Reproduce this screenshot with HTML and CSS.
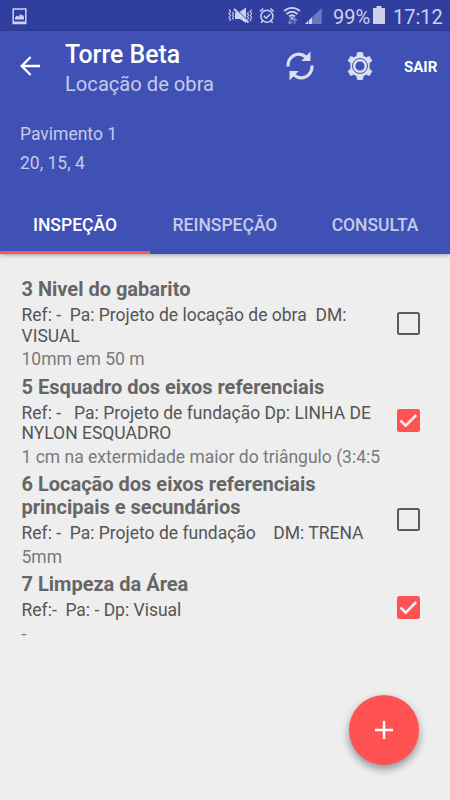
FILE: index.html
```html
<!DOCTYPE html>
<html lang="pt-BR">
<head>
<meta charset="utf-8">
<title>Torre Beta</title>
<link rel="stylesheet" href="styles.css">
</head>
<body>
<div class="screen">
  <div class="status">
    <svg class="picture" width="15" height="17" viewBox="0 0 15 17"><path fill="none" stroke="currentColor" stroke-width="1.5" d="M1.2.9h12.600v14.700h-12.600z"/><path fill="currentColor" d="M1 13.500h13v2.500H1zM3 11.500V9.500l2-2 1.500 1.200L8.500 6l1.500 1.500 1-.5 1 2v2.500z"/></svg>
    <div class="indicators">
      <svg width="97" height="20" viewBox="0 0 97 20">
        <g fill="none" stroke="currentColor" stroke-width="1.100"><path d="M1 3.500l1.500 2-1.500 2 1.500 2-1.500 2 1.500 2-1 1.500M4.500 6l1 1.500-1 1.500 1 1.500-1 1.500 1 1.500M20.500 6l-1 1.500 1 1.500-1 1.500 1 1.500-1 1.500M23.700 3.500l-1.500 2 1.500 2-1.500 2 1.500 2-1.500 2 1 1.500"/><path stroke-width="2" d="M6 3l14.500 13.500"/></g>
        <path fill="currentColor" d="M7 6.500h3l8 7.500v3l-6-4H7zM11.500 6L18 1.500v10.500z"/>
        <g fill="none" stroke="currentColor" stroke-width="1.500"><circle cx="38.900" cy="10.200" r="6"/><path d="M35.800 9.800l2.400 2.400 3.900-4M32 5.500l3.300-2.900M45.800 5.500l-3.300-2.900M34.700 14.800l-1.700 2M43 14.800l1.700 2"/></g>
        <g fill="none" stroke="currentColor" stroke-width="1.800"><path d="M56 5.200c4.500-4.500 11.500-4.500 16 0M58.500 8c3-3 8-3 11 0M61 10.500c1.700-1.700 4.300-1.700 6 0"/></g>
        <path fill="currentColor" d="M62.200 11.800q1.800-1.400 3.600 0L64 14z"/>
        <path opacity=".5" fill="none" stroke="currentColor" stroke-width="1.300" d="M62 12.500v5.500M59.800 15.700l2.200 2.200 2.200-2.200M66.700 18v-5.500M64.500 14.700l2.200-2.200 2.200 2.200"/>
        <path opacity=".4" fill="currentColor" d="M77 18L93.700 2v16z"/>
        <path fill="currentColor" d="M77 18l3-3v3zM81 18v-3.800l3-2.900V18z"/>
      </svg>
      <span class="percent">99%</span>
      <svg class="battery" width="12" height="18" viewBox="0 0 12 18"><path fill="currentColor" d="M3.500 0h5v2H12v16H0V2h3.500z"/></svg>
      <span class="time">17:12</span>
    </div>
  </div>
  <header class="header">
    <div class="toolbar">
      <svg class="back" width="20" height="20" viewBox="0 0 20 20"><path fill="none" stroke="#fff" stroke-width="2.300" d="M20 10H2M10.600 1L1.700 10l8.900 9"/></svg>
      <div class="heading">
        <h1>Torre Beta</h1>
        <p>Locação de obra</p>
      </div>
      <svg class="sync" width="28" height="30" viewBox="0 0 28 30"><g fill="none" stroke="currentColor" stroke-width="3.200"><path d="M1.900 15.500C1.900 5 12-.500 20 6"/><path d="M26.100 14.500C26.100 25 16 30.500 8 24"/></g><path fill="currentColor" d="M24.500.500V10H15.300zM3.500 29.500V20h9.200z"/></svg>
      <svg class="gear" width="26" height="28" viewBox="0 0 26 28"><path fill="currentColor" stroke="currentColor" stroke-width=".8" stroke-linejoin="round" d="M10.500.500h5l.7 3.600 2.700 1.600 3.500-1.200 2.500 4.300-2.800 2.400v5.600l2.800 2.400-2.500 4.300-3.500-1.200-2.700 1.600-.7 3.600h-5l-.7-3.600-2.700-1.600-3.500 1.200-2.500-4.300 2.800-2.400v-5.600L1.100 8.800l2.500-4.300 3.500 1.200 2.700-1.600z"/><circle cx="13" cy="14" r="7.500" fill="none" stroke="#3f51b5" stroke-width="1"/><circle cx="13" cy="14" r="4.600" fill="#3f51b5"/></svg>
      <span class="exit">SAIR</span>
    </div>
    <div class="place">
      <p>Pavimento 1</p>
      <p>20, 15, 4</p>
    </div>
    <nav class="tabs">
      <span class="tab active">INSPEÇÃO</span>
      <span class="tab">REINSPEÇÃO</span>
      <span class="tab">CONSULTA</span>
    </nav>
  </header>
  <main class="list">
    <section class="item">
      <div class="text">
        <h2>3 Nivel do gabarito</h2>
        <p class="ref">Ref: -  Pa: Projeto de locação de obra  DM:
VISUAL</p>
        <p class="note">10mm em 50 m</p>
      </div>
      <span class="box"></span>
    </section>
    <section class="item">
      <div class="text">
        <h2>5 Esquadro dos eixos referenciais</h2>
        <p class="ref">Ref: -   Pa: Projeto de fundação Dp: LINHA DE
NYLON ESQUADRO</p>
        <p class="note">1 cm na extermidade maior do triângulo (3:4:5</p>
      </div>
      <span class="box checked"><svg width="23" height="23" viewBox="0 0 23 23"><path d="M3.500 11.500l5.200 5.200L19.200 6"/></svg></span>
    </section>
    <section class="item">
      <div class="text">
        <h2>6 Locação dos eixos referenciais
principais e secundários</h2>
        <p class="ref">Ref: -  Pa: Projeto de fundação    DM: TRENA</p>
        <p class="note">5mm</p>
      </div>
      <span class="box"></span>
    </section>
    <section class="item">
      <div class="text">
        <h2>7 Limpeza da Área</h2>
        <p class="ref">Ref:-  Pa: - Dp: Visual</p>
        <p class="note">-</p>
      </div>
      <span class="box checked"><svg width="23" height="23" viewBox="0 0 23 23"><path d="M3.500 11.500l5.200 5.200L19.200 6"/></svg></span>
    </section>
  </main>
  <div class="fab"><svg width="18" height="18" viewBox="0 0 18 18"><path d="M9 0v18M0 9h18" stroke="#fff" stroke-width="2.500"/></svg></div>
</div>
</body>
</html>
```
FILE: styles.css
```css
* { box-sizing: border-box; margin: 0; padding: 0; }
body { font-family: Roboto, "Liberation Sans", sans-serif; background: #eee; }
svg { display: block; flex: none; }
.screen { position: relative; width: 450px; height: 800px; overflow: hidden; background: #eee; }
.status { height: 31px; background: #303f9f; color: #cdd1eb; display: flex; justify-content: space-between; padding: 0 8px 0 12px; }
.picture { margin-top: 8px; }
.indicators { display: flex; align-items: flex-start; padding-top: 6px; }
.percent, .time { font-size: 20px; line-height: 22px; }
.percent { margin-left: 8px; width: 40px; }
.battery { margin-right: 8px; }
.time { width: 49px; white-space: nowrap; }
.header { position: relative; z-index: 1; height: 223px; background: #3f51b5; color: #c5cae9; box-shadow: 0 1px 4px rgba(0,0,0,.35); display: flex; flex-direction: column; }
.toolbar { display: flex; align-items: center; height: 70px; padding-left: 20px; }
.heading { width: 221px; margin-left: 25px; white-space: nowrap; padding-top: 7px; }
.heading h1 { color: #fff; font-size: 24.900px; font-weight: 500; line-height: 29px; }
.heading p { font-size: 20.150px; line-height: 30px; }
.sync { color: #dcdff1; }
.gear { color: #dcdff1; margin-left: 33px; }
.exit { margin-left: 31px; color: #fff; font-size: 15px; font-weight: 700; padding-top: 1px; }
.place { padding: 19px 20px 0; font-size: 17.5px; line-height: 29px; }
.tabs { display: grid; grid-template-columns: repeat(3, 1fr); margin-top: auto; height: 60px; }
.tab { display: flex; align-items: center; justify-content: center; font-size: 17.5px; font-weight: 500; border-bottom: 3px solid transparent; padding-top: 4px; }
.active { color: #fff; border-color: #ff5252; }
.list { padding: 24.300px 30px 0 21.500px; display: flex; flex-direction: column; gap: 5.700px; }
.item { display: flex; align-items: center; justify-content: space-between; }
.text h2, .text p { white-space: pre; }
.item h2 { font-size: 20px; font-weight: 700; line-height: 23.400px; color: #666; }
.ref { font-size: 17.5px; line-height: 20.500px; color: #555; margin-top: 3.700px; }
.note { font-size: 17.5px; line-height: 20.500px; color: #7a7a7a; margin-top: 3px; }
.box { flex: none; width: 23px; height: 23px; border: 2.500px solid #5b5b5b; border-radius: 2.500px; margin-bottom: 2px; }
.checked { border: 0; background: #ff5252; }
.checked path { fill: none; stroke: #eee; stroke-width: 2.600; }
.fab { position: absolute; right: 31px; bottom: 35px; width: 70px; height: 70px; border-radius: 50%; background: #ff5252; display: flex; align-items: center; justify-content: center; box-shadow: 0 4px 8px rgba(0,0,0,.4); }
```
